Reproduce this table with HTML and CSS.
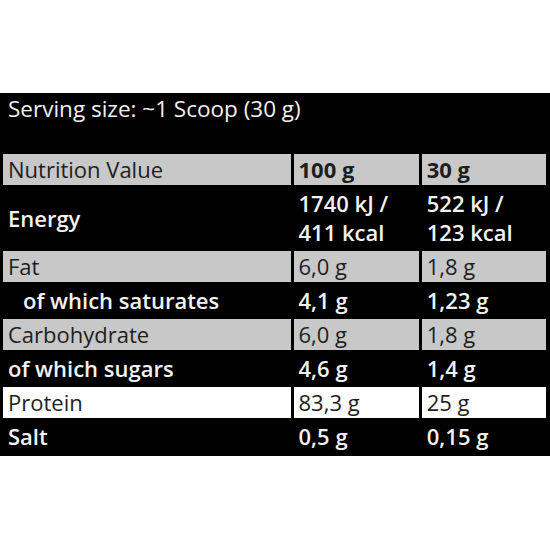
FILE: index.html
```html
<!DOCTYPE html>
<html lang="en">
<head>
<meta charset="utf-8">
<title>Nutrition</title>
<link rel="stylesheet" href="styles.css">
</head>
<body>
<section class="panel">
  <h2 class="serving">Serving size: ~1 Scoop (30 g)</h2>
  <table class="nutri">
    <colgroup><col class="c1"><col class="c2"><col class="c3"></colgroup>
    <tr class="grey head"><td class="name">Nutrition Value</td><td class="b">100 g</td><td class="b">30 g</td></tr>
    <tr class="dark"><td>Energy</td><td>1740 kJ /<br>411 kcal</td><td>522 kJ /<br>123 kcal</td></tr>
    <tr class="grey"><td>Fat</td><td>6,0 g</td><td>1,8 g</td></tr>
    <tr class="dark"><td class="indent">of which saturates</td><td>4,1 g</td><td>1,23 g</td></tr>
    <tr class="grey"><td>Carbohydrate</td><td>6,0 g</td><td>1,8 g</td></tr>
    <tr class="dark"><td>of which sugars</td><td>4,6 g</td><td>1,4 g</td></tr>
    <tr class="white"><td>Protein</td><td>83,3 g</td><td>25 g</td></tr>
    <tr class="dark"><td>Salt</td><td>0,5 g</td><td>0,15 g</td></tr>
  </table>
</section>
</body>
</html>
```

FILE: styles.css
```css
html, body {
  margin: 0;
  padding: 0;
  background: #fff;
}
body {
  font-family: "Open Sans", "DejaVu Sans", sans-serif;
}
.panel {
  margin-top: 93px;
  background: #000;
  padding: 0 0 1px 0;
}
.serving {
  margin: 0 0 28px 0;
  padding: 2px 8px 0;
  height: 28px;
  line-height: 28px;
  font-size: 22.5px;
  font-weight: 500;
  color: #f2f2f2;
}
.nutri {
  border-collapse: separate;
  border-spacing: 3px;
  table-layout: fixed;
  width: 549px;
}
.c1 { width: 287px; }
.c2 { width: 125px; }
.c3 { width: 124px; }
.nutri td {
  padding: 1px 5px;
  line-height: 29px;
  font-size: 22px;
  vertical-align: middle;
  white-space: nowrap;
}
.grey td {
  background: #c8c8c8;
  color: #1e1e1e;
}
.white td {
  background: #fff;
  color: #1e1e1e;
}
.dark td {
  background: #000;
  color: #f2f2f2;
  font-weight: 600;
}
.head .name { font-weight: 500; }
.head .b { font-weight: 700; }
.nutri td.indent { padding-left: 20px; }
```
